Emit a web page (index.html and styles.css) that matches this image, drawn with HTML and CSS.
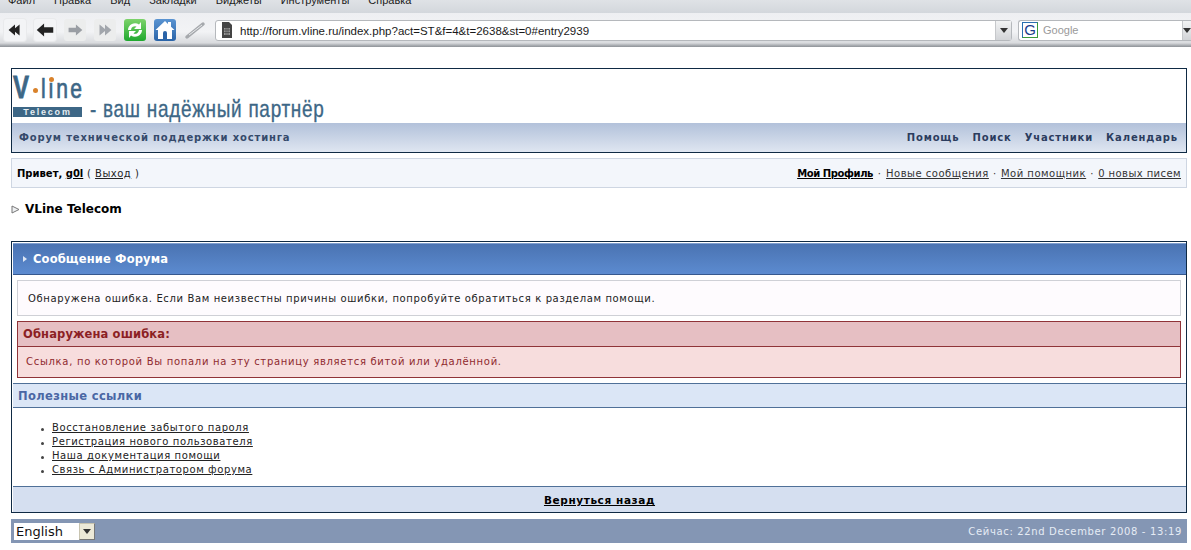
FILE: index.html
```html
<!DOCTYPE html>
<html lang="ru">
<head>
<meta charset="utf-8">
<title>VLine Telecom</title>
<link rel="stylesheet" href="styles.css">
</head>
<body>
<div class="menubar">
  <span>Файл</span><span>Правка</span><span>Вид</span><span>Закладки</span><span>Виджеты</span><span>Инструменты</span><span>Справка</span>
</div>
<div class="toolbar">
  <div class="tbtn"><svg viewBox="0 0 24 24" width="22" height="22"><path d="M12 6 5 12l7 6v-4l5 4V6l-5 4z" fill="#222"/></svg></div>
  <div class="tbtn"><svg viewBox="0 0 24 24" width="22" height="22"><path d="M11 5 3 12l8 7v-4h10V9H11z" fill="#222"/></svg></div>
  <div class="tbtn off"><svg viewBox="0 0 24 24" width="22" height="22"><path d="M13 6l7 6-7 6v-3.500H5v-5h8z" fill="#9a9ea4"/></svg></div>
  <div class="tbtn off"><svg viewBox="0 0 24 24" width="22" height="22"><path d="M6 6l6 5V6l7 6-7 6v-5l-6 5z" fill="#a2a6ac"/></svg></div>
  <div class="tbtn green"><svg viewBox="0 0 22 22" width="22" height="22"><path d="M4 11a7 7 0 0 1 11-5.500L17 3v7h-7l2.500-2.500A4 4 0 0 0 7 11z" fill="#fff"/><path d="M18 11a7 7 0 0 1-11 5.500L5 19v-7h7l-2.500 2.500A4 4 0 0 0 15 11z" fill="#fff"/></svg></div>
  <div class="tbtn blue"><svg viewBox="0 0 22 22" width="22" height="22"><path d="M11 2 1.500 11H4v9h14v-9h2.500L17 7.700V3h-3v2z" fill="#fff"/><path d="M9 20v-6a2 2 0 0 1 4 0v6z" fill="#2a64a8"/></svg></div>
  <div class="tbtn plain"><svg viewBox="0 0 22 22" width="22" height="22"><path d="M3 18 19 5" stroke="#a6a9ad" stroke-width="3.500" stroke-linecap="round"/><path d="M5 16 18 6" stroke="#e8eaec" stroke-width="1"/></svg></div>
  <div class="urlbar">
    <svg class="pageicon" viewBox="0 0 12 16" width="12" height="16"><path d="M1 0h7l3 3v13H1z" fill="#444"/><path d="M3 6h6v7H3z" fill="#999"/><path d="M3 8h6M3 10.500h6M5 6v7M7 6v7" stroke="#444" stroke-width=".7"/></svg>
    <span class="urltext">http://forum.vline.ru/index.php?act=ST&amp;f=4&amp;t=2638&amp;st=0#entry2939</span>
    <span class="dropbtn"><i class="arrow"></i></span>
  </div>
  <div class="search">
    <span class="gicon">G</span>
    <span class="searchtext">Google</span>
    <span class="dropbtn end"><i class="arrow"></i></span>
  </div>
</div>

<div class="page">
  <header class="banner">
    <div class="logo">
      <div class="brand">
        <div class="vline"><b>V</b><span>lıne</span></div>
        <div class="telecom">Telecom</div>
        <i class="dot"></i><i class="idot"></i>
      </div>
      <div class="slogan">- ваш надёжный партнёр</div>
    </div>
    <div class="submenu">
      <span class="forumtitle">Форум технической поддержки хостинга</span>
      <nav class="topnav"><a>Помощь</a><a>Поиск</a><a>Участники</a><a>Календарь</a></nav>
    </div>
  </header>

  <div class="userbar">
    <div><b class="hello">Привет, <u>g0l</u></b> ( <u>Выход</u> )</div>
    <div class="usernav"><u class="strong">Мой Профиль</u><span class="sep wide"> · </span><u>Новые сообщения</u><span class="sep"> · </span><u>Мой помощник</u><span class="sep"> · </span><u class="inbox">0 новых писем</u></div>
  </div>

  <div class="crumb"><svg viewBox="0 0 9 9" width="9" height="9"><path d="M1 1l7 3.500L1 8z" fill="#eef0f2" stroke="#777"/></svg><b>VLine Telecom</b></div>

  <main class="board">
    <div class="maintitle"><i class="tri"></i>Сообщение Форума</div>
    <div class="notice">Обнаружена ошибка. Если Вам неизвестны причины ошибки, попробуйте обратиться к разделам помощи.</div>
    <div class="error">
      <h3>Обнаружена ошибка:</h3>
      <p>Ссылка, по которой Вы попали на эту страницу является битой или удалённой.</p>
    </div>
    <h4 class="linkshead">Полезные ссылки</h4>
    <ul class="links">
      <li><u>Восстановление забытого пароля</u></li>
      <li><u>Регистрация нового пользователя</u></li>
      <li><u>Наша документация помощи</u></li>
      <li><u>Связь с Администратором форума</u></li>
    </ul>
    <div class="back"><u>Вернуться назад</u></div>
  </main>

  <footer class="bottom">
    <div class="select"><span>English</span><span class="selbtn"><i class="arrow"></i></span></div>
    <div class="time">Сейчас: 22nd December 2008 - 13:19</div>
  </footer>
</div>
</body>
</html>
```

FILE: styles.css
```css
* { box-sizing: border-box; }
html, body { margin: 0; padding: 0; }
body {
  width: 1191px;
  height: 550px;
  overflow: hidden;
  background: #fff;
  color: #000;
  font-family: "DejaVu Sans", Verdana, sans-serif;
  font-size: 10px;
}
u { text-decoration: underline; }

.menubar {
  height: 13px;
  overflow: hidden;
  display: flex;
  gap: 19px;
  padding-left: 8px;
  background: linear-gradient(#dfe2e6, #d3d7dc);
  font-family: "Liberation Sans", Arial, sans-serif;
  font-size: 11px;
  line-height: 1px;
  color: #222;
}
.toolbar {
  height: 34px;
  display: flex;
  align-items: center;
  padding: 0 0 0 4px;
  background: linear-gradient(#eeeff2, #f2f3f5 55%, #d9dbde 88%, #a4a8ad 96%, #8f9398);
}
.tbtn {
  width: 22px;
  height: 22px;
  margin-right: 8px;
  border-radius: 3px;
  background: #f3f4f6;
  box-shadow: 0 0 0 1px #e9eaec;
  display: flex;
  flex: none;
}
.tbtn.off { background: #eceded; box-shadow: none; }
.tbtn.plain { background: none; box-shadow: none; }
.tbtn.green { background: linear-gradient(#7dd36b, #1fa82e); box-shadow: none; }
.tbtn.blue { background: linear-gradient(#5a94d2, #2a64a8); box-shadow: none; }
.urlbar {
  margin-left: 1px;
  width: 797px;
  height: 21px;
  display: flex;
  align-items: center;
  flex: none;
  background: #fff;
  border: 1px solid #b5b8bc;
  border-radius: 3px;
  padding-left: 5px;
}
.pageicon { flex: none; }
.urltext {
  flex: 1;
  margin-left: 7px;
  padding-top: 1px;
  font-family: "Liberation Sans", Arial, sans-serif;
  font-size: 11.500px;
  color: #1a1a1a;
  white-space: nowrap;
}
.dropbtn {
  width: 16px;
  height: 19px;
  display: flex;
  align-items: center;
  justify-content: center;
  flex: none;
  background: linear-gradient(#f2f3f4, #d2d4d7);
  border-left: 1px solid #c6c8cb;
}
.arrow {
  width: 0;
  height: 0;
  border: 4px solid transparent;
  border-top: 5px solid #333;
  border-bottom: 0;
}
.search {
  margin-left: 6px;
  height: 21px;
  flex: 1;
  display: flex;
  align-items: center;
  background: #fff;
  border: 1px solid #b5b8bc;
  border-right: 0;
  border-radius: 3px 0 0 3px;
  padding-left: 3px;
  min-width: 0;
}
.gicon {
  width: 16px;
  height: 16px;
  flex: none;
  border: 1px solid #2a6fb0;
  border-right-color: #3a9a3a;
  border-bottom-color: #3a9a3a;
  font-family: "Liberation Sans", Arial, sans-serif;
  font-size: 15px;
  line-height: 14px;
  text-align: center;
  color: #1a3c8c;
}
.searchtext {
  flex: 1;
  margin-left: 5px;
  font-family: "Liberation Sans", Arial, sans-serif;
  font-size: 11px;
  color: #9a9a9a;
}
.dropbtn.end { width: 9px; justify-content: flex-start; }

.page { padding: 21px 4px 0 11px; }

.banner {
  height: 85px;
  border: 1px solid #0f2a44;
  background: #fff;
  display: flex;
  flex-direction: column;
}
.logo {
  height: 54px;
  flex: none;
  display: flex;
  align-items: flex-end;
  padding-left: 1px;
  color: #3d6786;
  font-family: "Liberation Sans", Arial, sans-serif;
}
.brand { position: relative; width: 69px; flex: none; padding-bottom: 6px; }
.vline {
  height: 30px;
  margin-bottom: 5px;
  display: flex;
  align-items: baseline;
  line-height: 30px;
}
.vline b {
  width: 16px;
  flex: none;
  font-size: 32px;
  transform: scaleX(.75);
  transform-origin: left;
  -webkit-text-stroke: .8px #3d6786;
}
.vline span {
  margin-left: 12px;
  flex: none;
  font-size: 27px;
  letter-spacing: 3px;
  transform: scaleX(.78);
  transform-origin: left;
  -webkit-text-stroke: .7px #3d6786;
}
.dot { position: absolute; left: 20px; bottom: 30px; width: 5px; height: 5px; border-radius: 50%; background: #d9822b; }
.idot { position: absolute; left: 36px; bottom: 41px; width: 5px; height: 5px; border-radius: 50%; background: #d9822b; }
.telecom {
  height: 10px;
  background: #3d6786;
  color: #e6edf2;
  font-size: 9px;
  font-weight: bold;
  line-height: 10px;
  letter-spacing: 1.800px;
  text-align: center;
}
.slogan {
  margin-left: 8px;
  padding-bottom: 1px;
  font-family: "Liberation Sans", Arial, sans-serif;
  font-size: 24px;
  line-height: 27px;
  letter-spacing: .9px;
  white-space: nowrap;
  transform: scaleX(.79);
  transform-origin: left;
  -webkit-text-stroke: .35px #3d6786;
}
.submenu {
  flex: 1;
  display: flex;
  justify-content: space-between;
  align-items: center;
  padding: 0 8px 0 7px;
  background: linear-gradient(#b2c1da, #dfe6f1);
  color: #2b3c5e;
  font-size: 10px;
  font-weight: bold;
  letter-spacing: .85px;
}
.forumtitle { color: #354a6b; }
.topnav { display: flex; gap: 13px; }

.userbar {
  height: 30px;
  margin-top: 5px;
  display: flex;
  justify-content: space-between;
  align-items: center;
  padding: 0 5px 0 5px;
  background: #f3f6fb;
  border: 1px solid #ced6e2;
  font-size: 10px;
  letter-spacing: .5px;
  color: #222;
}
.hello { color: #000; letter-spacing: 0; }
.strong { font-weight: bold; color: #000; letter-spacing: -.4px; }
.usernav { color: #333; }
.sep { margin: 0 .5px; }
.sep.wide { margin: 0 1px; }
.inbox { letter-spacing: .42px; }

.crumb {
  height: 53px;
  padding-top: 14px;
  display: flex;
  align-items: flex-start;
  gap: 5px;
  font-size: 12px;
  line-height: 14px;
}
.crumb svg { margin-top: 3px; }

.board {
  height: 272px;
  border: 1px solid #0f2a44;
  padding-top: 1px;
  display: flex;
  flex-direction: column;
}
.maintitle {
  height: 32px;
  flex: none;
  margin: 0 0 0 1px;
  display: flex;
  align-items: center;
  padding-left: 10px;
  gap: 6px;
  background: linear-gradient(#4a73b2, #5c8bd0);
  border-top: 1px solid #7f9fd0;
  border-bottom: 1px solid #36588e;
  color: #fff;
  font-size: 11.500px;
  font-weight: bold;
  letter-spacing: .15px;
}
.tri { width: 0; height: 0; border: 3px solid transparent; border-left: 4px solid #dde6f4; border-right: 0; }
.notice {
  height: 36px;
  flex: none;
  margin: 5px 5px 0 5px;
  padding-left: 10px;
  display: flex;
  align-items: center;
  background: #fefbfe;
  border: 1px solid #cfd0d6;
  font-size: 10px;
  letter-spacing: .63px;
  color: #222;
}
.error {
  height: 57px;
  flex: none;
  margin: 5px 5px 0 5px;
  border: 1px solid #8f3338;
  background: #f7dddd;
  color: #8f2a2e;
}
.error h3 {
  margin: 0;
  height: 25px;
  padding-left: 5px;
  background: #e6bfc3;
  border-bottom: 1px solid #8f3338;
  font-size: 11.500px;
  line-height: 25px;
  font-weight: bold;
  letter-spacing: .13px;
  color: #8c1f24;
}
.error p {
  margin: 0;
  padding-left: 8px;
  font-size: 10px;
  line-height: 30px;
  letter-spacing: .7px;
}
.linkshead {
  height: 25px;
  flex: none;
  margin: 5px 0 0 1px;
  padding-left: 5px;
  background: #dbe6f6;
  border-top: 1px solid #4f7098;
  border-bottom: 1px solid #4f7098;
  color: #4a67a4;
  font-size: 11.500px;
  font-weight: bold;
  line-height: 25px;
  letter-spacing: .35px;
}
.links {
  flex: 1;
  margin: 0;
  padding: 13px 0 0 29px;
  list-style: none;
  font-size: 10px;
  line-height: 14px;
  letter-spacing: .6px;
  color: #222;
}
.links li { display: flex; align-items: center; gap: 8px; }
.links li::before { content: ""; width: 3px; height: 3px; border-radius: 50%; background: #444; margin-top: 2px; }
.back {
  height: 26px;
  flex: none;
  margin-left: 1px;
  background: #d5dff0;
  border-top: 1px solid #4f7098;
  text-align: center;
  font-size: 10.500px;
  line-height: 26px;
  font-weight: bold;
  letter-spacing: .6px;
}

.bottom {
  height: 24px;
  margin-top: 6px;
  display: flex;
  justify-content: space-between;
  align-items: center;
  padding: 0 5px 0 3px;
  background: #8496b4;
}
.select {
  width: 81px;
  height: 17px;
  display: flex;
  justify-content: space-between;
  background: #fff;
  font-family: "DejaVu Sans", Verdana, sans-serif;
  font-size: 13px;
  line-height: 17px;
  padding-left: 2px;
  color: #111;
}
.selbtn {
  width: 16px;
  background: #ece9d8;
  border: 1px solid #c8c4b0;
  border-right-color: #777;
  border-bottom-color: #777;
  display: flex;
  align-items: center;
  justify-content: center;
}
.time {
  color: #e6ecf4;
  font-size: 10px;
  letter-spacing: .65px;
}
```
